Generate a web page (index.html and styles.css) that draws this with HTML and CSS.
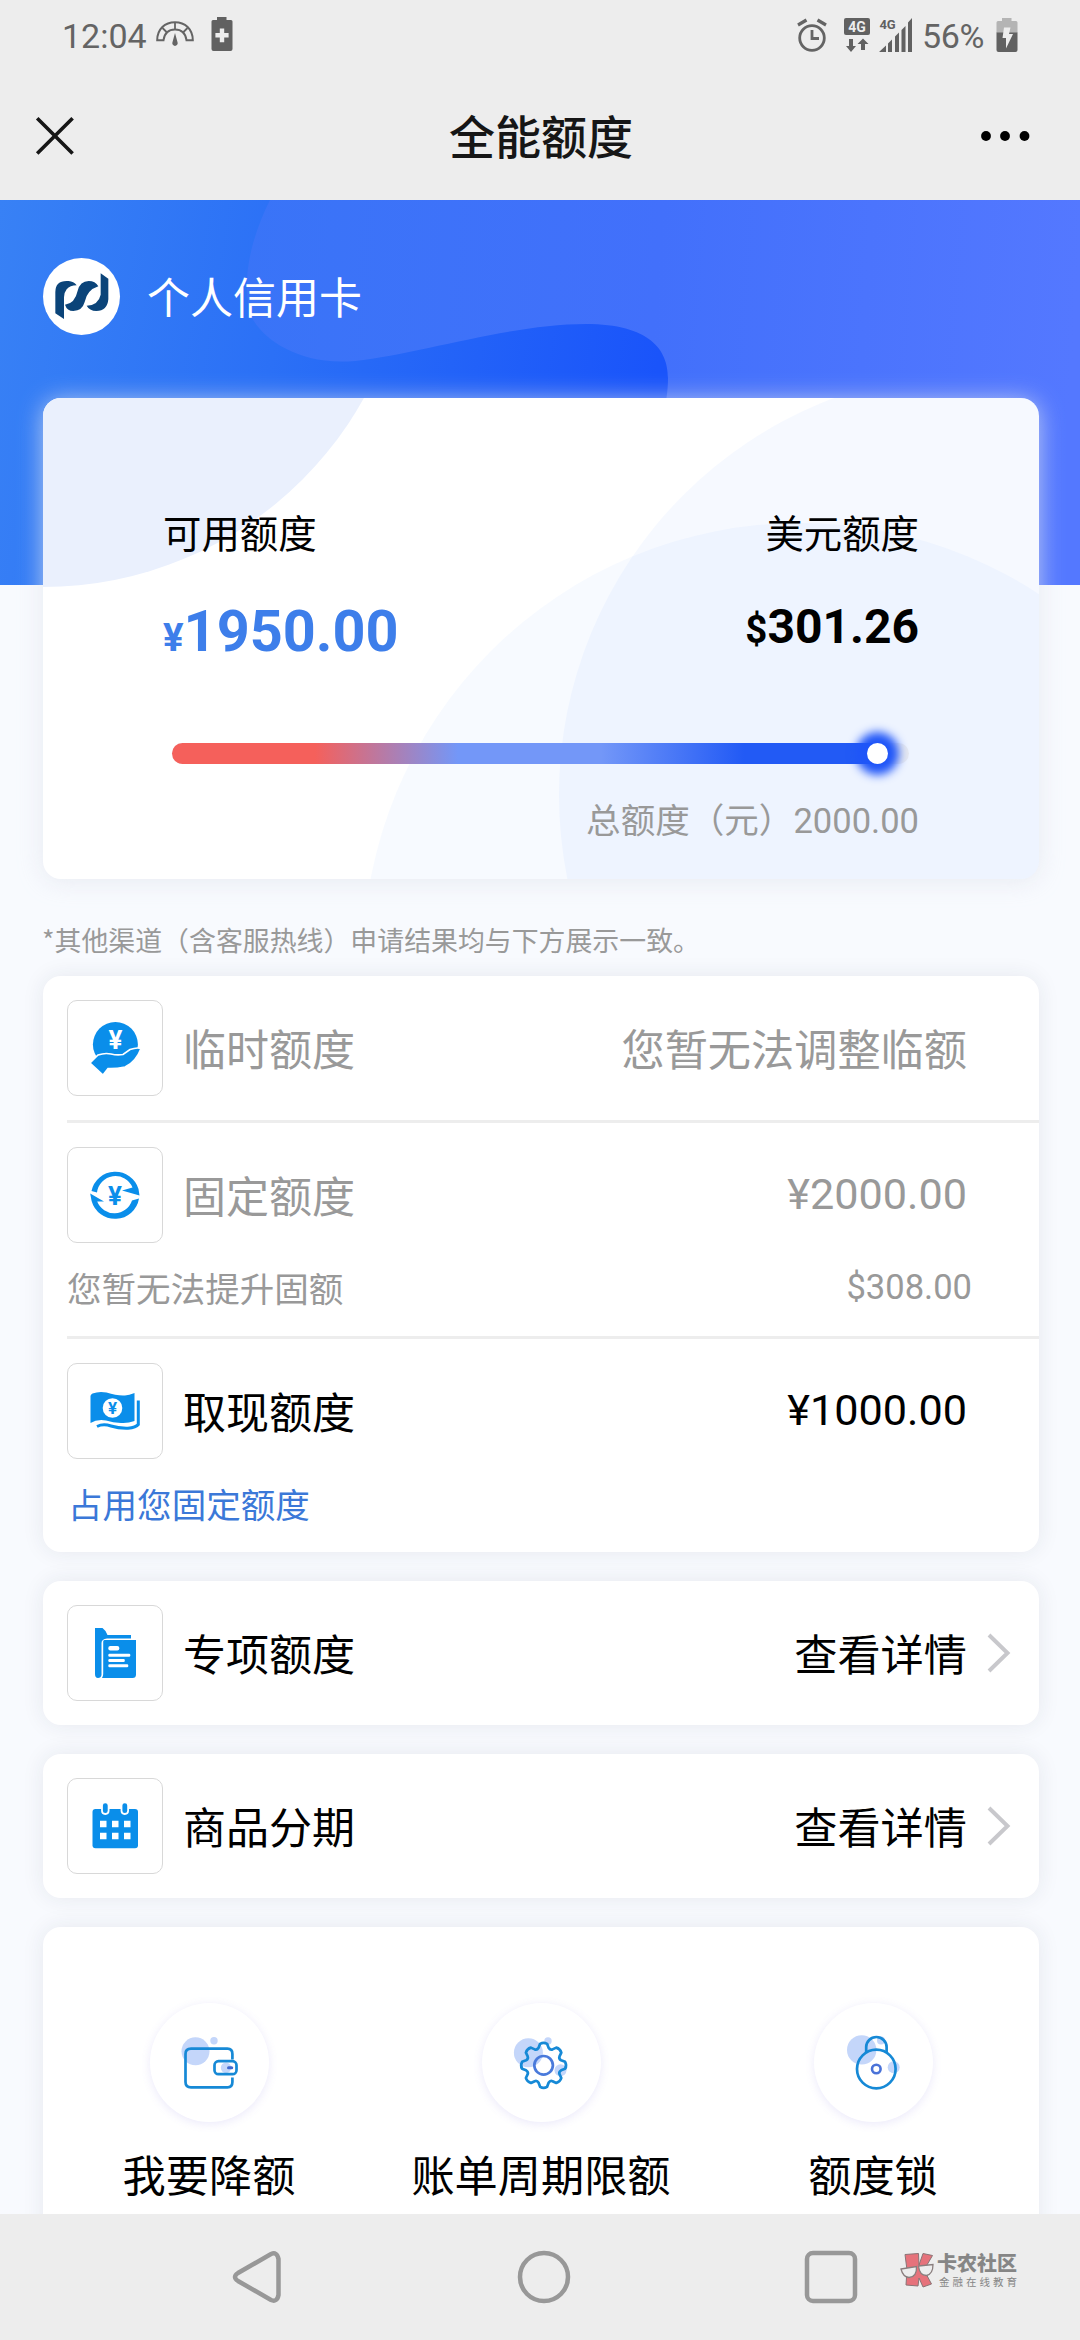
FILE: index.html
```html
<!DOCTYPE html>
<html lang="zh-CN">
<head>
<meta charset="utf-8">
<title>全能额度</title>
<link rel="stylesheet" href="styles.css">
</head>
<body>
<header class="statusbar">
  <div class="status-left">
    <span class="clock">12:04</span>
    <svg class="ic-gauge" viewBox="0 0 38 26" width="38" height="26" fill="none" stroke="#646464">
      <path d="M1.2 19.2C1.2 8 9 1.2 19 1.2S36.800 8 36.800 19.200H30.500C29.500 12 25 8.500 19 8.500S8.500 12 7.500 19.200Z" stroke-width="2"/>
      <path d="M19 1v7M6.500 7l5 5M31.500 7l-5 5" stroke-width="1.800"/>
      <path d="M19 12l2.600 9.500a2.700 2.700 0 1 1-5.200 0z" fill="#646464" stroke="none"/>
    </svg>
    <svg class="ic-batt" viewBox="0 0 22 34" width="22" height="34">
      <path d="M6 0h9.500v3H20q1.500 0 1.500 1.500V32q0 2-2 2h-17q-2 0-2-2V4.500Q.5 3 2 3h4z" fill="#616161"/>
      <path d="M8.800 11.500h4.400v4.600h4.400v4.400h-4.400v4.700H8.800v-4.700H4.400v-4.400h4.400z" fill="#ededed"/>
    </svg>
  </div>
  <div class="status-right">
    <svg viewBox="0 0 30 34" width="30" height="34" fill="none" stroke="#646464">
      <circle cx="15" cy="20" r="12.300" stroke-width="2.800"/>
      <path d="M15 12v8.500h7" stroke-width="2.800"/>
      <path d="M1 7l8.500-5M29 7l-8.500-5" stroke-width="3.200"/>
    </svg>
    <svg class="ic-data" viewBox="0 0 26 34" width="26" height="34">
      <rect width="26" height="17" rx="2" fill="#616161"/>
      <text x="13" y="13.500" text-anchor="middle" class="t-data">4G</text>
      <path d="M5 21h4v7h3L7 34l-5-6h3zM17 32h4v-6h3.500L19 20.500 13.500 26H17z" fill="#616161"/>
    </svg>
    <svg class="ic-signal" viewBox="0 0 34 34" width="34" height="34" fill="#616161">
      <text x="0.500" y="11" class="t-sig">4G</text>
      <path d="M0 34l7-6.500V34zM9 25.500l4-4V34H9zM16 18.500l4-4V34h-4zM22.500 12l4-4v26h-4zM29 4.500L33 0v34h-4z"/>
    </svg>
    <span class="percent">56%</span>
    <svg class="ic-charge" viewBox="0 0 22 34" width="22" height="34">
      <path d="M6 0h9.500v3H20q1.500 0 1.500 1.500V15H.5V4.500Q.5 3 2 3h4z" fill="#b4b4b4"/>
      <path d="M.5 14.500h21V32q0 2-2 2h-17q-2 0-2-2z" fill="#616161"/>
      <path d="M8 9.500h6.500L13 16h4L10 30.500V20H6.500z" fill="#ededed"/>
    </svg>
  </div>
</header>
<nav class="titlebar">
  <svg viewBox="0 0 38 38" width="38" height="38" stroke="#161616" stroke-width="3.600"><path d="M1.200 1.200L36.600 36.600M36.600 1.200L1.200 36.600"/></svg>
  <h1 class="title">全能额度</h1>
  <svg viewBox="0 0 50 12" width="50" height="12"><circle cx="6" cy="6" r="4.900"/><circle cx="25" cy="6" r="4.900"/><circle cx="44.500" cy="6" r="4.900"/></svg>
</nav>

<main class="page">
  <section class="hero">
    <svg class="hero-art" viewBox="0 0 1080 385" width="1080" height="385">
      <defs>
        <linearGradient id="wave" x1="240" y1="0" x2="1080" y2="60" gradientUnits="userSpaceOnUse">
          <stop offset="0" stop-color="#3974f7"/><stop offset=".5" stop-color="#4270fb"/><stop offset="1" stop-color="#5478ff"/>
        </linearGradient>
      </defs>
      <path fill="url(#wave)" d="M270 0C246 48 242 90 252 118C264 140 300 166 355 161C420 154 510 124 586 124C650 124 668 150 668 178C668 210 655 260 600 385H1080V0Z"/>
    </svg>
    <div class="hero-head">
      <svg class="logo" viewBox="21 24 231 231" width="77" height="77">
        <circle cx="136.500" cy="139.500" r="115.500" fill="#fff"/>
        <g fill="#0b4479">
          <path d="M58 190V126Q58 93 92 93H98Q113 94 122 106Q102 106 92 118Q84 128 84 142V207Z"/>
          <path d="M87 164Q93 183 112 183Q139 182 146 156Q153 120 187 109Q178 93 158 93Q132 94 125 122Q117 160 87 164Z"/>
          <path d="M194 70L217 86V148Q214 183 181 183Q160 182 152 167Q187 166 194 134Z"/>
        </g>
      </svg>
      <span class="hero-name">个人信用卡</span>
    </div>
  </section>

  <section class="quota">
    <svg class="quota-art" viewBox="0 0 996 481" width="996" height="481">
      <circle cx="0" cy="-178" r="367" fill="#eaf0fd"/>
      <circle cx="940" cy="397" r="424" fill="#4682ff" fill-opacity=".05"/>
      <circle cx="757" cy="562" r="437" fill="#4682ff" fill-opacity=".045"/>
    </svg>
    <div class="quota-body">
      <div class="quota-labels"><span>可用额度</span><span>美元额度</span></div>
      <div class="quota-values">
        <div class="cny"><span class="cur">¥</span>1950.00</div>
        <div class="usd"><span class="cur">$</span>301.26</div>
      </div>
      <div class="track"><div class="fill"></div><div class="knob"></div></div>
      <div class="total">总额度（元）<span class="num">2000.00</span></div>
    </div>
  </section>

  <p class="note">*其他渠道（含客服热线）申请结果均与下方展示一致。</p>

  <section class="card">
    <div class="item muted">
      <div class="row">
        <div class="iconbox"><svg viewBox="0 0 96 96" width="96" height="96">
          <circle cx="48.400" cy="44.500" r="22.500" fill="#0a8eea"/>
          <path d="M23 63L31 55Q38 52.500 44 54Q50 55.500 56 54.500L63 49.500Q70 47 74 48.500Q69 62 58 67Q48 69 41 68.500L36 75Z" fill="#0a8eea" stroke="#fff" stroke-width="1.600"/>
          <text x="48.400" y="48.500" text-anchor="middle" class="yen yen-white">¥</text>
        </svg></div>
        <span class="label">临时额度</span><span class="value">您暂无法调整临额</span>
      </div>
    </div>
    <div class="item muted">
      <div class="row">
        <div class="iconbox"><svg viewBox="0 0 96 96" width="96" height="96">
          <g fill="#0a8eea">
            <path d="M24.500 44A24.300 24.300 0 0 1 71.500 42L72.500 48.500L55 43.500L65.500 40.500A18.500 18.500 0 0 0 30 45.500Z"/>
            <path d="M72 51.500A24.300 24.300 0 0 1 24.600 54L23.200 46.500L37 54.500L30.200 54.500A18.500 18.500 0 0 0 65 53.500Z"/>
          </g>
          <text x="48" y="58" text-anchor="middle" class="yen">¥</text>
        </svg></div>
        <span class="label">固定额度</span><span class="value num">¥2000.00</span>
      </div>
      <div class="sub"><span>您暂无法提升固额</span><span class="num">$308.00</span></div>
    </div>
    <div class="item">
      <div class="row">
        <div class="iconbox"><svg viewBox="0 0 96 96" width="96" height="96">
          <path d="M25.500 30.500Q32 28 39.500 29.500Q50 33 58 32.500Q62 32 67.500 30V58Q61 60.500 54 60Q46 59.500 39 57.500Q30 56 23.500 60V33Q23.500 31.500 25.500 30.500Z" fill="#0a8eea"/>
          <path d="M71.300 37.500V61.500Q69 64.500 61 65.200Q52 65.500 44 63Q36 60.500 30 63.500" fill="none" stroke="#0a8eea" stroke-width="3"/>
          <circle cx="45.500" cy="45" r="9.800" fill="#fff"/>
          <text x="45.500" y="51.200" text-anchor="middle" class="yen yen-small">¥</text>
        </svg></div>
        <span class="label">取现额度</span><span class="value num">¥1000.00</span>
      </div>
      <div class="sub link"><span>占用您固定额度</span></div>
    </div>
  </section>

  <section class="card">
    <div class="row padded">
      <div class="iconbox"><svg viewBox="0 0 96 96" width="96" height="96">
        <path d="M28 23H35.500Q38.500 25 40.500 30H64V33.500H40Q34.500 34 34.500 38V70Q34 73 31 73Q28 73 28 69Z" fill="#0a8eea"/>
        <path d="M37.500 35H69V69.500Q69 73 65.500 73H35Q36.200 71 36.200 69V36.500Q36.200 35 37.500 35Z" fill="#0a8eea"/>
        <g fill="#fff"><rect x="41.300" y="41" width="11" height="4.600" rx="2"/><rect x="41.300" y="48.800" width="22" height="2.900" rx="1.200"/><rect x="41.300" y="54" width="16.500" height="2.900" rx="1.200"/><rect x="41.300" y="59.300" width="20" height="2.900" rx="1.200"/></g>
      </svg></div>
      <span class="label">专项额度</span><span class="value">查看详情</span>
      <svg class="chev" viewBox="0 0 24 40" width="24" height="40"><path d="M2 2L20.500 20L2 38"/></svg>
    </div>
  </section>

  <section class="card">
    <div class="row padded">
      <div class="iconbox"><svg viewBox="0 0 96 96" width="96" height="96">
        <rect x="25.500" y="31" width="45.500" height="39.200" rx="3" fill="#0a8eea"/>
        <g fill="#0a8eea" stroke="#fff" stroke-width="1.800"><rect x="35" y="24.400" width="6.600" height="11.600" rx="3.200"/><rect x="54.500" y="24.400" width="6.600" height="11.600" rx="3.200"/></g>
        <path fill="#fff" d="M33 42.700h6.500v6.500H33zM45 42.700h6.500v6.500H45zM57 42.700h6.500v6.500H57zM33 54.700h6.500v6.500H33zM45 54.700h6.500v6.500H45zM57 54.700h6.500v6.500H57z"/>
      </svg></div>
      <span class="label">商品分期</span><span class="value">查看详情</span>
      <svg class="chev" viewBox="0 0 24 40" width="24" height="40"><path d="M2 2L20.500 20L2 38"/></svg>
    </div>
  </section>

  <section class="card actions">
    <div class="action">
      <div class="disc"><svg viewBox="0 0 119 119" width="119" height="119" fill="none" stroke="#1689d6" stroke-width="2.700">
        <g fill="#c4d6fa" stroke="none"><circle cx="45.500" cy="48.300" r="14"/><circle cx="64" cy="37.700" r="3.700"/><circle cx="76" cy="64.700" r="5.200"/></g>
        <path d="M82.400 56.500V51Q82.400 45.700 77.400 45.700H41Q35.500 45.700 35.500 51V79Q35.500 84.300 41 84.300H77.400Q82.400 84.300 82.400 79V74.500"/>
        <rect x="64.500" y="58.200" width="22" height="13" rx="4"/>
        <path d="M78.500 64.700h3.200" stroke="#3f68cf" stroke-width="3" stroke-linecap="round"/>
      </svg></div>
      <span>我要降额</span>
    </div>
    <div class="action">
      <div class="disc"><svg viewBox="0 0 119 119" width="119" height="119" fill="none" stroke="#1689d6" stroke-width="2.700" stroke-linejoin="round">
        <g fill="#c4d6fa" stroke="none"><circle cx="46.400" cy="49.700" r="14.500"/><circle cx="66" cy="38" r="3.700"/><circle cx="78.500" cy="67.300" r="6"/></g>
        <path transform="translate(61.600 62.300)" d="M-5 -17.500L-3.500 -21.500Q0 -23.500 3.500 -21.500L5 -17.500Q6.500 -15 8.900 -15.900L12.700 -17.700Q16.600 -16.600 17.700 -12.700L15.900 -8.900Q15 -6.500 17.500 -5L21.500 -3.500Q23.500 0 21.500 3.500L17.500 5Q15 6.500 15.900 8.900L17.700 12.700Q16.600 16.600 12.700 17.700L8.900 15.900Q6.500 15 5 17.500L3.500 21.500Q0 23.500 -3.500 21.500L-5 17.500Q-6.500 15 -8.900 15.900L-12.700 17.700Q-16.600 16.600 -17.700 12.700L-15.900 8.900Q-15 6.500 -17.500 5L-21.500 3.500Q-23.500 0 -21.500 -3.500L-17.500 -5Q-15 -6.500 -15.900 -8.900L-17.700 -12.700Q-16.600 -16.600 -12.700 -17.700L-8.900 -15.900Q-6.500 -15 -5 -17.500Z"/>
        <circle cx="61.600" cy="62.300" r="9.300" stroke="#4a7adb"/>
      </svg></div>
      <span>账单周期限额</span>
    </div>
    <div class="action">
      <div class="disc"><svg viewBox="0 0 119 119" width="119" height="119" fill="none" stroke="#1689d6" stroke-width="2.700">
        <g fill="#c4d6fa" stroke="none"><circle cx="47.700" cy="46.900" r="14.700"/><circle cx="67" cy="37.500" r="4"/><circle cx="79.700" cy="64.300" r="6"/></g>
        <circle cx="62.300" cy="66" r="19.300"/>
        <path d="M52.200 49.500V44A10.200 10 0 0 1 72.600 44V49.500"/>
        <circle cx="62.300" cy="66" r="4.300" stroke="#4a72d8" stroke-width="2.600"/>
      </svg></div>
      <span>额度锁</span>
    </div>
  </section>
</main>

<footer class="navbar">
  <svg viewBox="0 0 54 54" width="54" height="54"><path d="M41 4Q47 1.500 48.500 9V45Q47 52.500 41 50L8 31Q2 27 8 23Z"/></svg>
  <svg viewBox="0 0 54 54" width="54" height="54"><circle cx="27" cy="27" r="24"/></svg>
  <svg viewBox="0 0 54 54" width="54" height="54"><rect x="3" y="3" width="48" height="48" rx="6"/></svg>
</footer>
<div class="watermark">
  <svg viewBox="0 0 34 35" width="34" height="35">
    <path d="M5 1.500L18.500 .5L19 12L23 .5L32.500 2.500L24 17L31.500 31L23 34L19 25L18 33L6 32L7 17Z" fill="#e6727b" stroke="#8a7476" stroke-width="1"/>
    <path d="M1 16L16.500 13.500Q17 24 9 24.500Q3 24 1 16ZM18.500 13L33 11.500Q33 21 26.500 22.500Q19.500 22.500 18.500 13Z" fill="#ededed" stroke="#8a7e7e" stroke-width="1.300"/>
  </svg>
  <div class="wm-text"><b>卡农社区</b><span>金融在线教育</span></div>
</div>
</body>
</html>
```
FILE: styles.css
```css
* { box-sizing: border-box; }
html, body { margin: 0; padding: 0; }
body {
  width: 1080px;
  height: 2340px;
  overflow: hidden;
  display: flex;
  flex-direction: column;
  position: relative;
  background: #f8fafe;
  color: #000;
  font-family: "Noto Sans CJK SC", Roboto, sans-serif;
}
svg { display: block; flex: none; overflow: visible; }
.num { font-family: Roboto, "Noto Sans CJK SC", sans-serif; }

/* system status bar */
.statusbar {
  height: 68px;
  padding: 0 62px 0 62px;
  display: flex;
  justify-content: space-between;
  background: #ededed;
  color: #646464;
  font: 34px/68px Roboto, sans-serif;
}
.status-left, .status-right { display: flex; align-items: center; }
.status-right { padding-top: 1px; }
.clock { width: 94px; padding-top: 4px; }
.ic-batt { margin-left: 17px; }
.ic-data { margin-left: 17px; }
.ic-signal { margin-left: 9px; }
.percent { width: 63px; margin-left: 9px; padding-top: 3px; letter-spacing: -.4px; }
.ic-charge { margin-left: 11px; }
.t-data { font: bold 14px Roboto, sans-serif; fill: #ededed; }
.t-sig { font: bold 13px Roboto, sans-serif; fill: #616161; letter-spacing: -.3px; }

.titlebar {
  height: 132px;
  padding: 0 50px 0 36px;
  display: flex;
  align-items: center;
  justify-content: space-between;
  background: #ededed;
}
.titlebar svg { margin-top: 3px; }
.title {
  margin: 0 -14px 0 14px;
  font-size: 46px;
  line-height: 60px;
  font-weight: 500;
  color: #161616;
}

.page { flex: none; height: 2014px; overflow: hidden; }

.hero {
  height: 385px;
  position: relative;
  background: linear-gradient(99deg, #3881f5 0%, #2b70f6 26%, #1a54fa 60%);
}
.hero-art { position: absolute; left: 0; top: 0; }
.hero-head {
  position: relative;
  padding: 58px 43px 0;
  display: flex;
  gap: 27px;
}
.hero-name { font-size: 43px; line-height: 74px; color: #fff; }

/* quota summary */
.quota {
  position: relative;
  width: 996px;
  height: 481px;
  margin: -187px 0 0 43px;
  border-radius: 18px;
  background: #fff;
  box-shadow: 0 2px 24px rgba(226, 229, 237, .75);
}
.quota-art { position: absolute; left: 0; top: 0; overflow: hidden; border-radius: 18px; }
.quota-body { position: relative; padding: 106px 120px 0; }
.quota-labels {
  display: flex;
  justify-content: space-between;
  font-size: 38.4px;
  line-height: 54px;
}
.quota-values {
  display: flex;
  justify-content: space-between;
  align-items: flex-start;
  height: 68px;
  margin-top: 40px;
  font-family: Roboto, sans-serif;
  font-weight: 700;
}
.cny { font-size: 57.600px; line-height: 68px; color: #3d7eea; }
.cny .cur { font-size: 38.400px; }
.usd { font-size: 48px; line-height: 58px; }
.usd .cur { font-size: 38.400px; }
.track {
  position: relative;
  height: 21px;
  margin: 77px 10px 0 9px;
  border-radius: 11px;
  background: #e6e9f0;
}
.fill {
  width: 715px;
  height: 21px;
  border-radius: 11px;
  background: linear-gradient(90deg, #f5605b 20%, #7397f8 40%, #7397f8 60%, #225af5 80%);
}
.knob {
  position: absolute;
  left: 694.5px;
  top: 0;
  width: 21px;
  height: 21px;
  border-radius: 50%;
  background: #fff;
  box-shadow: 0 0 10px 11px #1f55f8;
}
.total {
  margin-top: 30px;
  text-align: right;
  font-size: 34.560px;
  line-height: 48px;
  color: #999;
}
.total .num { line-height: 1; }

.note {
  margin: 42px 42px 17px;
  font-size: 26.900px;
  line-height: 38px;
  color: #999;
}

/* list cards */
.card {
  width: 996px;
  margin: 0 0 29px 43px;
  border-radius: 18px;
  background: #fff;
  box-shadow: 0 0 22px rgba(40, 50, 75, .085);
}
.item { margin-left: 24px; padding: 24px 0; }
.item + .item { border-top: 3px solid #ededed; }
.row { display: flex; align-items: center; height: 96px; padding-right: 72px; }
.padded { height: 144px; padding-left: 24px; padding-right: 28px; }
.iconbox {
  width: 96px;
  height: 96px;
  border: 1px solid #d8d8d8;
  border-radius: 10px;
}
.iconbox svg { margin: -1px; }
.label { margin: 0 0 2px 20px; font-size: 43px; line-height: 60px; }
.value { margin: 0 0 2px auto; font-size: 43.200px; line-height: 60px; }
.value.num { margin-bottom: 0; }
.muted { color: #999; }
.sub {
  display: flex;
  justify-content: space-between;
  align-items: center;
  height: 48px;
  margin: 20px 0 1px;
  padding-right: 67px;
  font-size: 34.560px;
  line-height: 48px;
}
.link { color: #3b78d8; padding-left: 1px; }
.chev { margin-left: 20px; fill: none; stroke: #c8c8cc; stroke-width: 4; }
.yen { font: bold 26px Roboto, sans-serif; fill: #0a8eea; }
.yen-white { fill: #fff; }
.yen-small { font-size: 17px; }

.actions {
  display: grid;
  grid-template-columns: repeat(3, 1fr);
  height: 400px;
  padding-top: 76px;
}
.action {
  display: flex;
  flex-direction: column;
  align-items: center;
  gap: 21px;
  font-size: 43.200px;
  line-height: 60px;
}
.disc {
  width: 119px;
  height: 119px;
  border-radius: 50%;
  background: #fff;
  box-shadow: 0 2px 10px rgba(110, 100, 220, .14);
}

/* system navigation */
.navbar {
  height: 126px;
  padding: 0 222px 0 230px;
  display: flex;
  align-items: center;
  justify-content: space-between;
  background: #ededed;
}
.navbar svg { fill: none; stroke: #989898; stroke-width: 4.500; }

.watermark {
  position: absolute;
  left: 900px;
  top: 2253px;
  display: flex;
  gap: 3px;
  color: #868686;
}
.wm-text { display: flex; flex-direction: column; gap: 2px; }
.wm-text b { font-size: 20px; line-height: 20px; font-weight: 900; white-space: nowrap; }
.wm-text span { font-size: 10.500px; line-height: 14px; letter-spacing: 3px; padding-left: 2px; white-space: nowrap; }
```
